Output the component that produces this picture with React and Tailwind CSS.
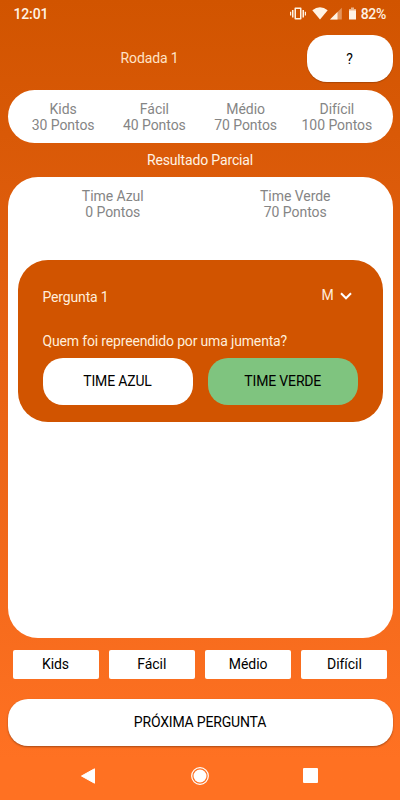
import React from 'react'

const LEVELS = [
  { name: 'Kids', points: 30 },
  { name: 'Fácil', points: 40 },
  { name: 'Médio', points: 70 },
  { name: 'Difícil', points: 100 },
]

const TEAMS = [
  { name: 'Time Azul', points: 0 },
  { name: 'Time Verde', points: 70 },
]

function StatusBar() {
  return (
    <div className="flex h-[35px] justify-between pl-[13.5px] pr-[14px] font-medium leading-[28px] text-[#fff3e4]">
      <span className="tracking-[-0.15px]">12:01</span>
      <div className="flex items-start">
        <svg width="66" height="28" viewBox="0 0 66 28" fill="#fff3e4" className="mr-[5px]">
          {/* Vibrar */}
          <path d="M5.300 7.500h5.400q.8 0 .8.800v10.400q0 .8-.8.800H5.300q-.8 0-.8-.800V8.300q0-.8.800-.800zM6 9v9h4V9z" fillRule="evenodd" />
          <path d="M2 10h1.500v7.500H2zM0 11.800h1.200v3.800H0zM12.500 10H14v7.500h-1.500zM14.800 11.800H16v3.800h-1.200z" />
          {/* Wi-Fi */}
          <path d="M22.300 10.200Q30 4.400 37.700 10.200L30 19.500z" />
          {/* Sinal */}
          <path d="M51.800 7.800V19.500H40z" opacity=".4" />
          <path d="M47.500 12.100v7.400H40z" />
          {/* Bateria */}
          <path d="M61 7.500h3V9h2v2h-7V9h2z" opacity=".6" />
          <path d="M59 10.500h7v9h-7z" />
        </svg>
        <span className="tracking-[-0.3px]">82%</span>
      </div>
    </div>
  )
}

function ScoreColumn({ name, points }) {
  return (
    <div className="text-center">
      <p>{name}</p>
      <p>{points} Pontos</p>
    </div>
  )
}

function QuestionCard() {
  return (
    <div className="mx-[10px] mt-[39.5px] h-[162px] rounded-[30px] bg-[#d15400] px-[25px] pt-[26px] tracking-[-0.16px] text-[#ffeedb]">
      <div className="flex justify-between leading-[22px]">
        <span>Pergunta 1</span>
        <div className="-mt-[2px] flex h-[22px] items-center gap-[6px] pr-[6px]">
          <span>M</span>
          <svg width="12" height="8" viewBox="0 0 12 8" fill="none" stroke="#fff" strokeWidth="2" className="mt-[2px]">
            <path d="M1 1.300l5 5 5-5" />
          </svg>
        </div>
      </div>
      <p className="mt-[22.5px] leading-[22px]">Quem foi repreendido por uma jumenta?</p>
      <div className="mt-[5.5px] flex gap-[15.5px]">
        <button className="h-[47px] w-[150px] shrink-0 rounded-[20px] bg-white text-black">TIME AZUL</button>
        <button className="h-[47px] w-[149.5px] shrink-0 rounded-[20px] bg-[#7fc47f] text-black">TIME VERDE</button>
      </div>
    </div>
  )
}

function NavBar() {
  return (
    <div className="flex items-center justify-between pl-[80px] pr-[82px]">
      <svg width="16" height="18" viewBox="0 0 16 18" fill="#fff">
        <path d="M1.500 9L14.500 1.800v14.400z" stroke="#fff" strokeLinejoin="round" />
      </svg>
      <svg width="20" height="20" viewBox="0 0 20 20">
        <circle cx="10" cy="10" r="8.300" fill="none" stroke="#fff" strokeWidth="1.200" />
        <circle cx="10" cy="10" r="6.500" fill="#fff" />
      </svg>
      <div className="h-[15px] w-[15px] rounded-[1px] bg-white" />
    </div>
  )
}

export default function App() {
  return (
    <div className="flex h-[800px] w-[400px] flex-col overflow-hidden bg-linear-to-b from-[#d15400] to-[#ff7122] to-95% font-['Roboto',sans-serif] text-sm">
      <StatusBar />

      {/* Cabeçalho */}
      <div className="flex h-[46.5px] px-[7.5px]">
        <h1 className="flex-1 pr-[15px] pt-[12px] text-center leading-[22px] tracking-[-0.15px] text-[#ffe3c6]">Rodada 1</h1>
        <button className="h-[46.5px] w-[86px] rounded-[20px] bg-white pt-[2px] text-black shadow-[0_1px_1px_rgba(0,0,0,0.2)]">
          ?
        </button>
      </div>

      {/* Pontuação por nível */}
      <div className="mx-[7.5px] mt-[8px] grid h-[53.5px] grid-cols-4 rounded-[27px] bg-white px-[10px] pt-[11.5px] leading-4 tracking-[-0.05px] text-[#858585]">
        {LEVELS.map((level) => (
          <ScoreColumn key={level.name} {...level} />
        ))}
      </div>

      <h2 className="h-[34px] text-center leading-[35px] tracking-[-0.15px] text-[#fff3e4]">Resultado Parcial</h2>

      {/* Resultado */}
      <div className="mx-[7.5px] h-[460.5px] rounded-[30px] bg-white pt-[11px]">
        <div className="grid grid-cols-2 pl-[14px] pr-[6px] leading-4 tracking-[-0.05px] text-[#858585]">
          {TEAMS.map((team) => (
            <ScoreColumn key={team.name} {...team} />
          ))}
        </div>
        <QuestionCard />
      </div>

      {/* Adicionar pergunta por nível */}
      <div className="mt-[12.5px] flex gap-[10.3px] pl-[12.5px]">
        {LEVELS.map((level) => (
          <button key={level.name} className="h-[28.5px] w-[86px] rounded-[2px] bg-white tracking-[-0.05px] text-black">
            {level.name}
          </button>
        ))}
      </div>

      <button className="mx-[7.5px] mb-[20px] mt-[20px] h-[47px] shrink-0 rounded-[20px] bg-white tracking-[-0.18px] text-black shadow-[0_1px_2px_rgba(0,0,0,0.35)]">
        PRÓXIMA PERGUNTA
      </button>

      <NavBar />
    </div>
  )
}
